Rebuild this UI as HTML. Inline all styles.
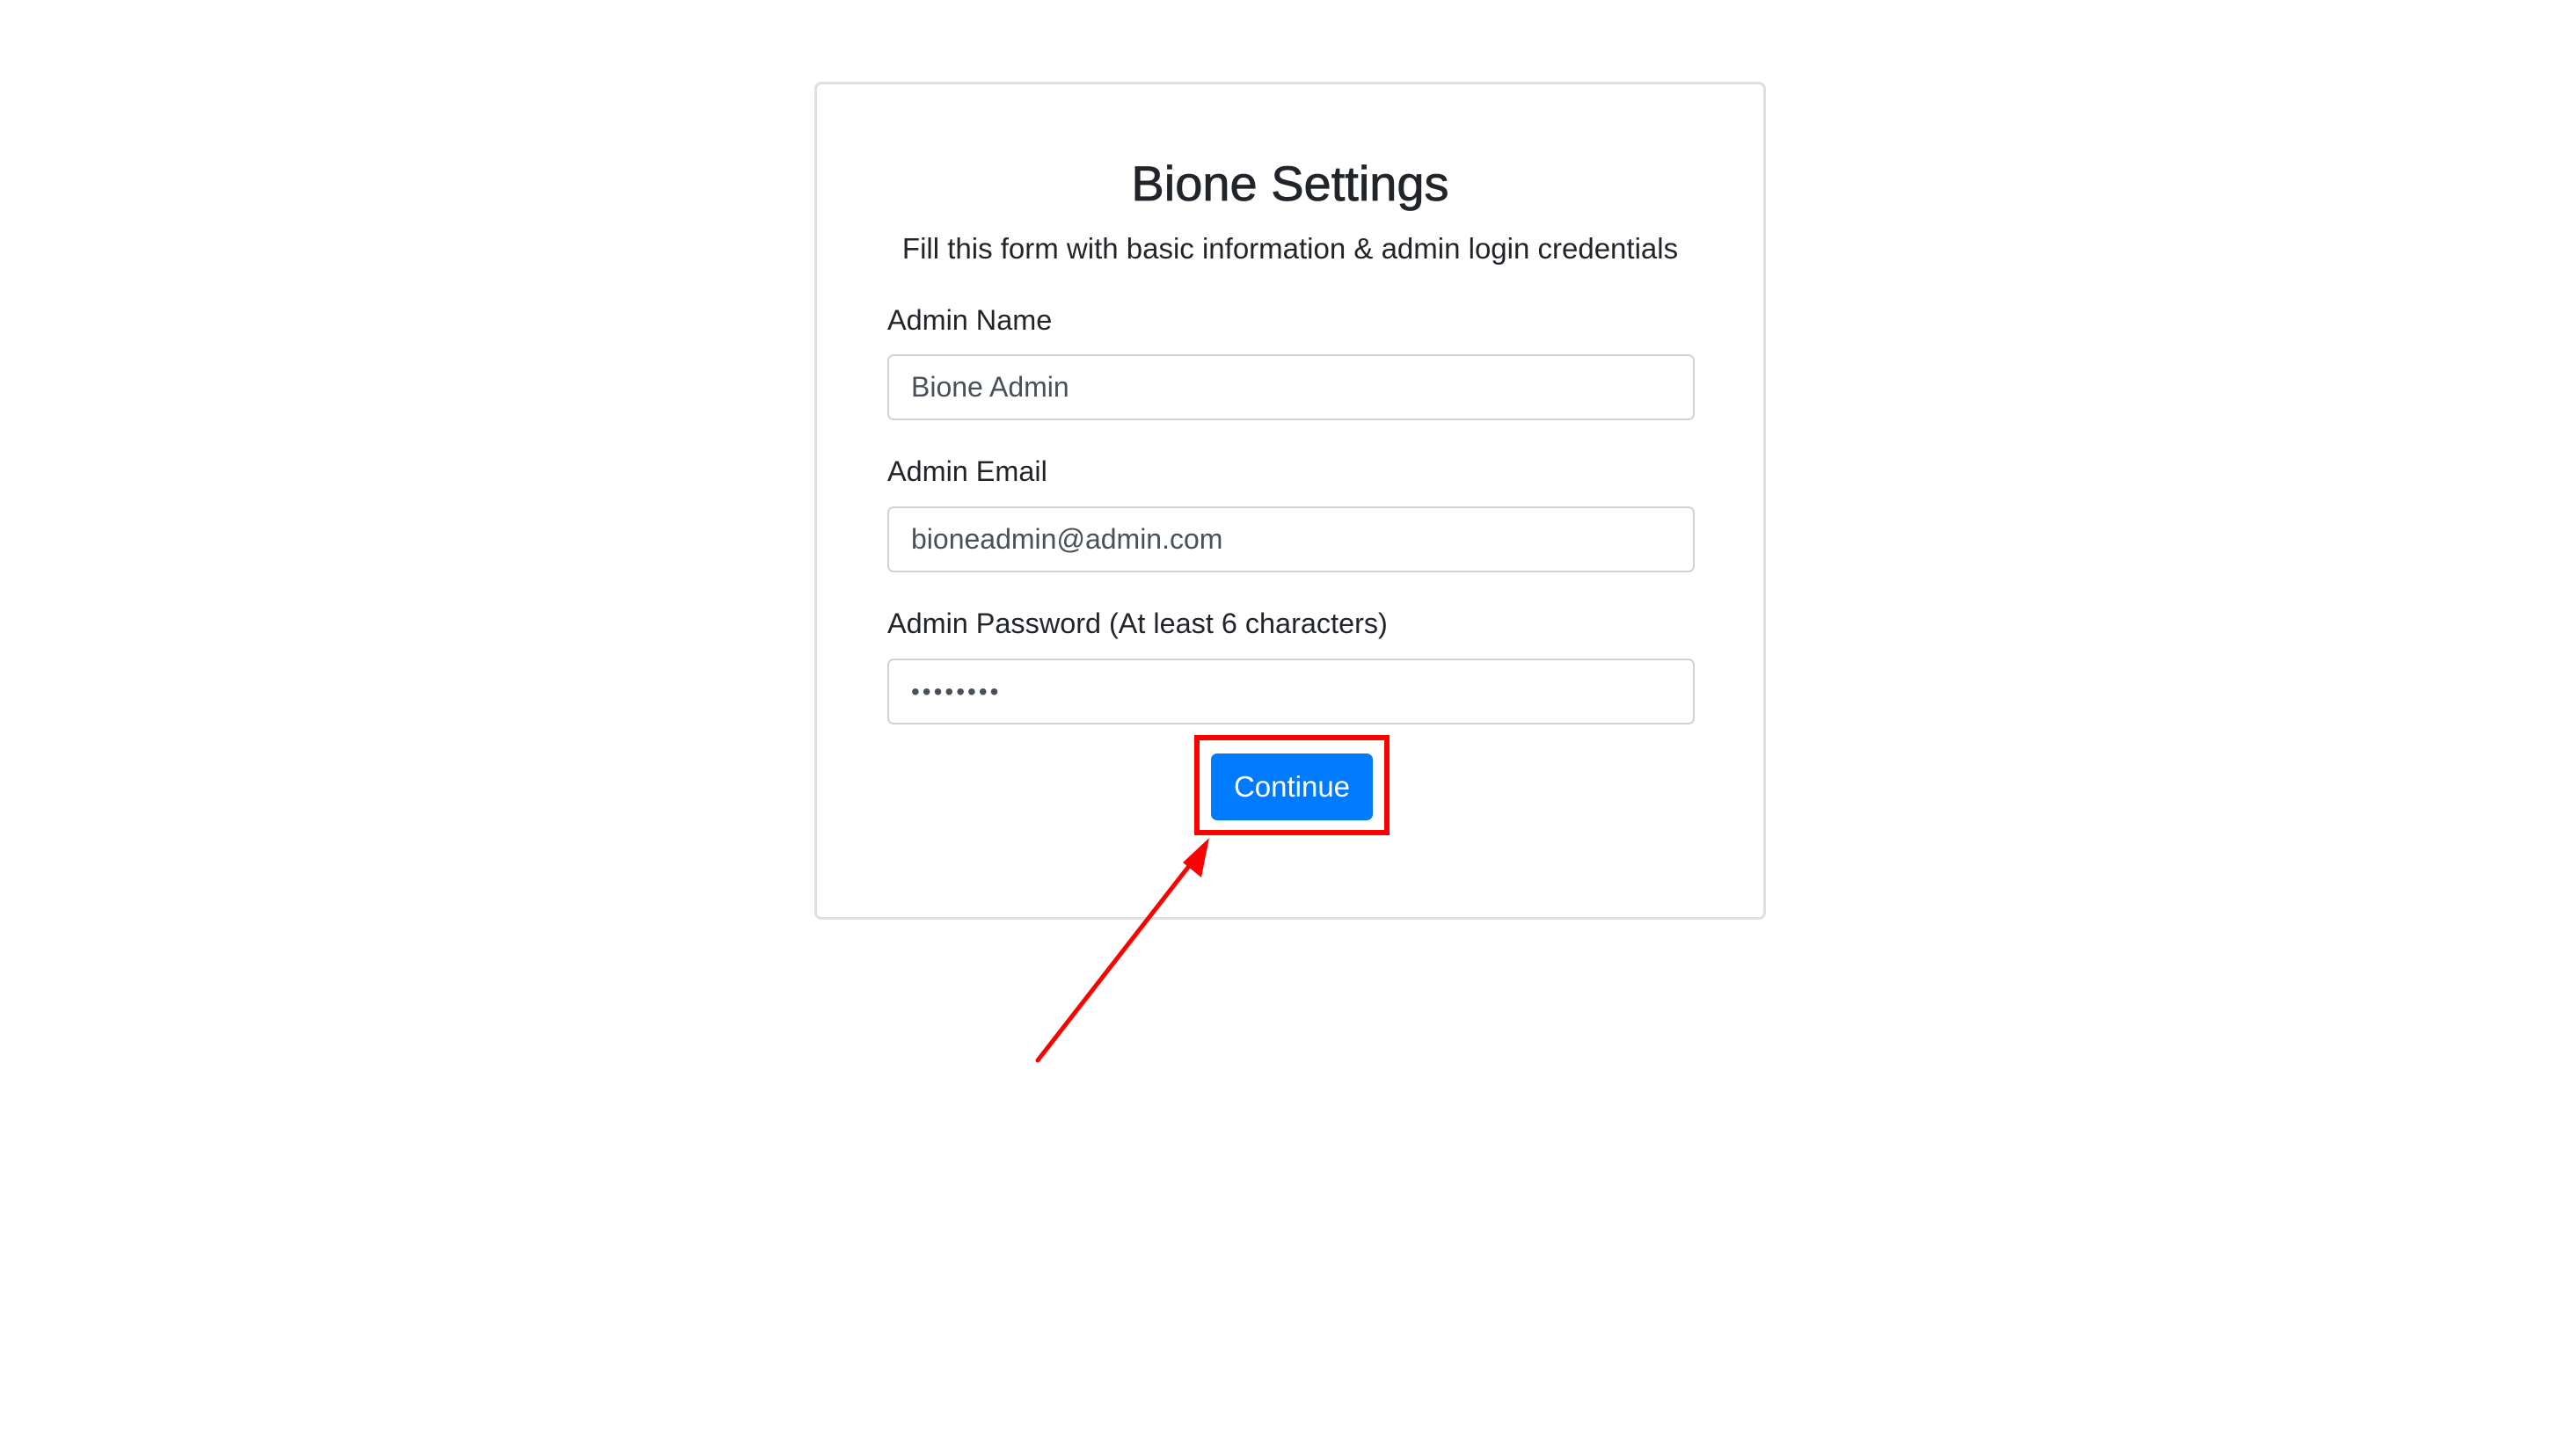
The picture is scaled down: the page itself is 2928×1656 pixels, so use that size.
<!DOCTYPE html>
<html><head><meta charset="utf-8"><style>
html,body{margin:0;padding:0;background:#fff;width:2928px;height:1656px;overflow:hidden;font-family:"Liberation Sans",Arial,sans-serif;color:#212529}
.card{position:absolute;left:926px;top:93px;width:1082px;height:953px;border:3px solid #dfdfdf;border-radius:8px;box-sizing:border-box}
.abs{position:absolute;white-space:nowrap}
.inp{position:absolute;left:1009px;width:918px;height:75px;border:2px solid #ced4da;border-radius:7px;box-sizing:border-box;font-size:32px;color:#495057;padding-left:25px;line-height:71px}
.lab{font-size:32.4px;line-height:38px}
</style></head><body>
<div class="card"></div>
<div class="abs" style="left:926px;width:1082px;text-align:center;top:177px;font-size:56px;line-height:64px;-webkit-text-stroke:0.8px #212529">Bione Settings</div>
<div class="abs" style="left:926px;width:1082px;text-align:center;top:264px;font-size:33px;line-height:38px">Fill this form with basic information &amp; admin login credentials</div>
<div class="abs lab" style="left:1009px;top:345px">Admin Name</div>
<div class="inp" style="top:403px">Bione Admin</div>
<div class="abs lab" style="left:1009px;top:517px">Admin Email</div>
<div class="inp" style="top:576px">bioneadmin@admin.com</div>
<div class="abs lab" style="left:1009px;top:690px">Admin Password (At least 6 characters)</div>
<div class="inp" style="top:749px;letter-spacing:3px;font-size:28px">••••••••</div>
<div class="abs" style="left:1377px;top:857px;width:184px;height:76px;background:#007bff;border-radius:7px;color:#fff;font-size:33px;text-align:center;line-height:76px">Continue</div>
<div class="abs" style="left:1358px;top:836px;width:222px;height:114px;border:6px solid #f00;box-sizing:border-box"></div>
<svg class="abs" style="left:0;top:0" width="2928" height="1656">
<line x1="1180" y1="1206" x2="1359" y2="976" stroke="#f00" stroke-width="5" stroke-linecap="round"/>
<polygon points="1375,953 1366,998 1345,981" fill="#f00"/>
</svg>
</body></html>
